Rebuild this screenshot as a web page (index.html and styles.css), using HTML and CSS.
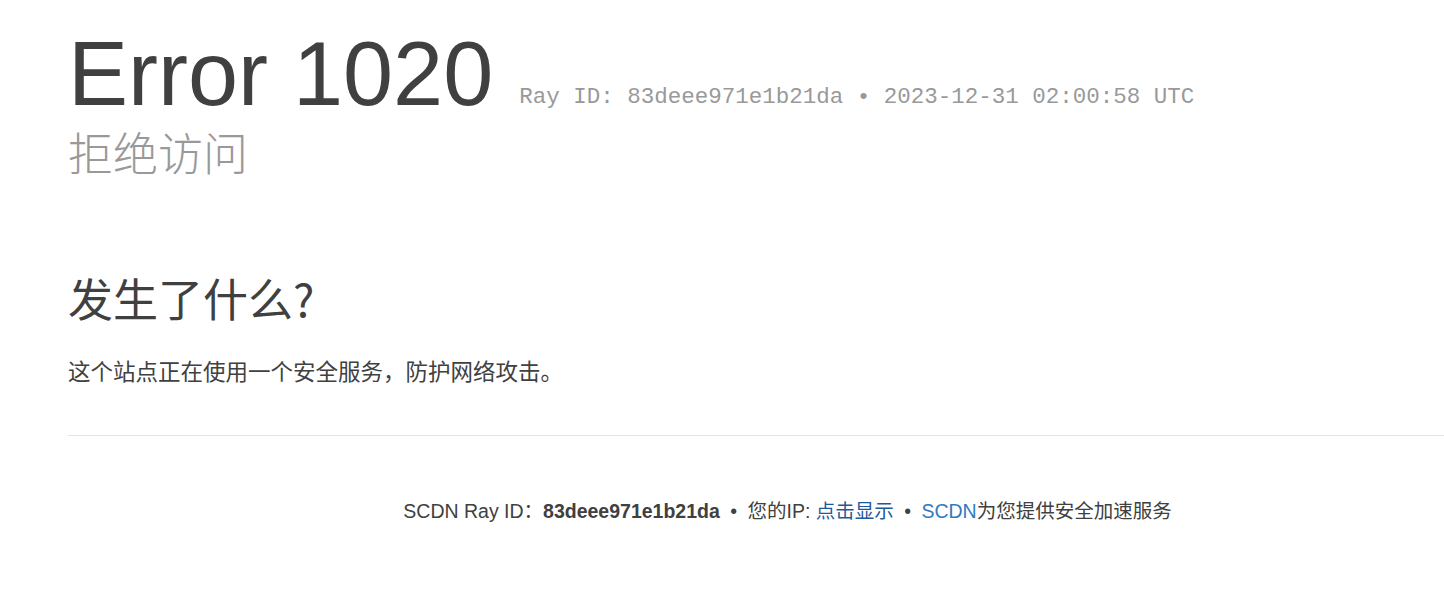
FILE: index.html
```html
<!DOCTYPE html>
<html lang="zh-CN">
<head>
<meta charset="utf-8">
<title>拒绝访问</title>
<link rel="stylesheet" href="styles.css">
</head>
<body>
<div class="wrap">
  <header class="head">
    <h1 class="title-row"><span class="code">Error 1020</span><span class="ray">Ray ID: 83deee971e1b21da &bull; 2023-12-31 02:00:58 UTC</span></h1>
    <h2 class="subtitle">拒绝访问</h2>
  </header>
  <section class="what">
    <h2 class="what-title">发生了什么?</h2>
    <p class="what-text">这个站点正在使用一个安全服务，防护网络攻击。</p>
  </section>
  <footer class="foot">
    <span>SCDN Ray ID：</span><strong class="rid">83deee971e1b21da</strong>
    <span class="sep">&bull;</span>
    <span>您的IP: <a class="reveal" href="#">点击显示</a></span>
    <span class="sep">&bull;</span>
    <span><a class="brand" href="#">SCDN</a>为您提供安全加速服务</span>
  </footer>
</div>
</body>
</html>
```

FILE: styles.css
```css
html, body {
  margin: 0;
  padding: 0;
  background: #fff;
  overflow: hidden;
}
body {
  font-family: "Liberation Sans", Arial, "Noto Sans CJK SC", sans-serif;
  color: #404040;
}
.wrap {
  margin-left: 68px;
  width: 1439px;
  padding-top: 20px;
}
.title-row {
  margin: 0;
  font-weight: 400;
  font-size: 90px;
  line-height: 108px;
  height: 108px;
  white-space: nowrap;
}
.code {
  color: #404040;
}
.ray {
  display: inline-block;
  margin-left: 26px;
  vertical-align: 2px;
  line-height: 1;
  font-family: "Liberation Mono", "Courier New", monospace;
  font-size: 22.5px;
  color: #999;
}
.subtitle {
  margin: -3px 0 0;
  font-family: "Noto Sans CJK SC", sans-serif;
  font-weight: 300;
  font-size: 45px;
  line-height: 54px;
  color: #999;
}
.what {
  margin-top: 92px;
  padding-bottom: 48px;
  border-bottom: 1px solid #e5e5e5;
}
.what-title {
  margin: 0;
  font-family: "Noto Sans CJK SC", sans-serif;
  font-weight: 400;
  font-size: 45px;
  line-height: 54px;
  color: #404040;
}
.what-text {
  margin: 29px 0 0;
  font-family: "Noto Sans CJK SC", sans-serif;
  font-size: 22.5px;
  line-height: 33px;
  color: #404040;
}
.foot {
  margin-top: 60px;
  text-align: center;
  font-size: 19.5px;
  line-height: 30px;
  color: #404040;
}
.rid {
  font-weight: 700;
}
.sep {
  margin: 0 5px;
}
.reveal {
  color: #1d5a9a;
  text-decoration: none;
}
.brand {
  color: #2f7bbf;
  text-decoration: none;
}
```
